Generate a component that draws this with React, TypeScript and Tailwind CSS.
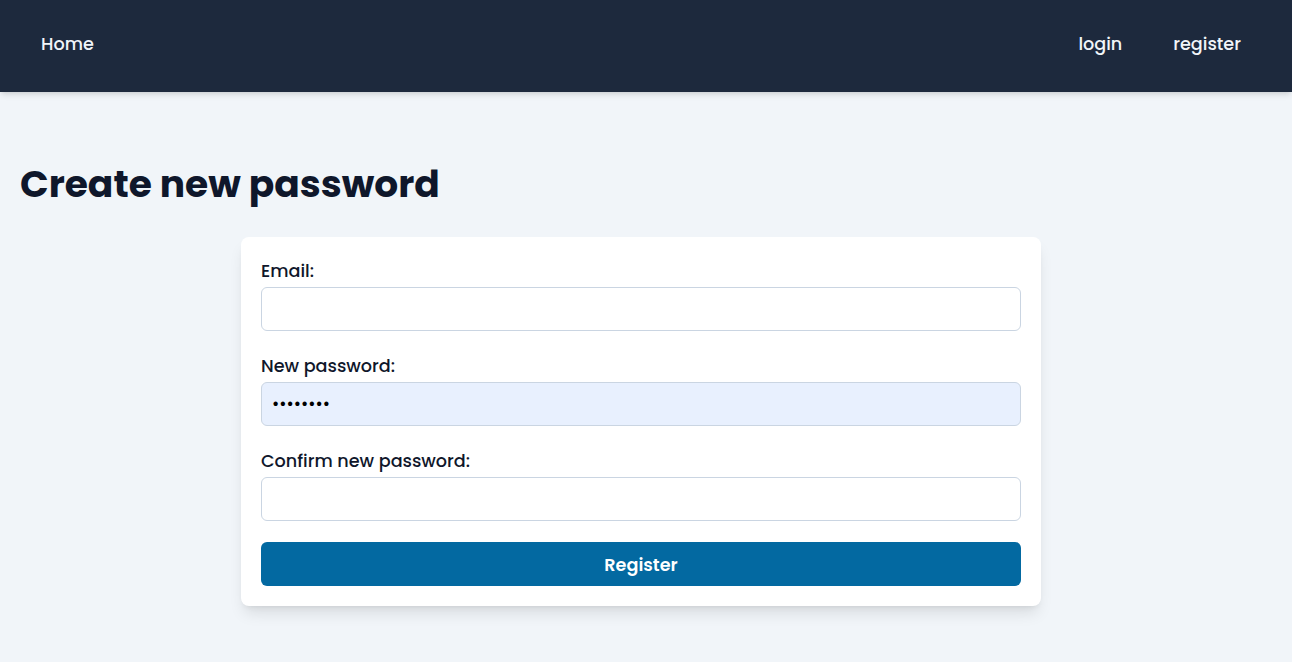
import React from 'react';

const font = { fontFamily: 'Poppins, Inter, "Noto Sans", sans-serif' };

const Field: React.FC<{ label: string; type?: string; value?: string; filled?: boolean }> = ({
  label,
  type = 'text',
  value = '',
  filled,
}) => (
  <div className="mb-[21px]">
    <label className="block text-[17.6px] leading-[28px] font-medium text-slate-900 mb-0.5">{label}</label>
    <input
      type={type}
      value={value}
      readOnly
      className={`w-full h-11 rounded-md border border-slate-300 px-2.5 text-[17.6px] text-black outline-none ${
        filled ? 'bg-[#e8f0fe]' : 'bg-white'
      }`}
    />
  </div>
);

export default function App() {
  return (
    <div className="min-h-screen bg-slate-100 text-slate-900" style={font}>
      <nav className="h-[92px] bg-slate-800 shadow-md flex items-center justify-between pl-[41px] pr-[51px]">
        <a className="text-[17.6px] leading-6 font-medium text-slate-100 -mt-1">Home</a>
        <div className="flex items-center gap-[51px] -mt-1">
          <a className="text-[17.6px] leading-6 font-medium text-slate-100">login</a>
          <a className="text-[17.6px] leading-6 font-medium text-slate-100">register</a>
        </div>
      </nav>
      <main className="px-5 pt-[68px]">
        <h1 className="text-[37.6px] leading-[48px] font-bold text-slate-900 mb-[29px]">Create new password</h1>
        <form className="ml-[221px] w-[800px] bg-white rounded-lg shadow-lg p-5">
          <Field label="Email:" />
          <Field label="New password:" type="password" value="12345678" filled />
          <Field label="Confirm new password:" type="password" />
          <button
            type="button"
            className="w-full h-11 rounded-md bg-[#0369a1] text-white font-semibold text-[17.6px] pt-0.5"
          >
            Register
          </button>
        </form>
      </main>
    </div>
  );
}
